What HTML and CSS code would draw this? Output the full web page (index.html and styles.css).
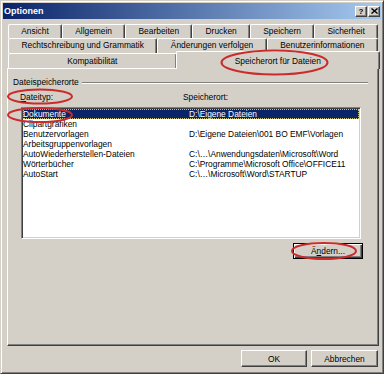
FILE: index.html
```html
<!DOCTYPE html>
<html lang="de">
<head>
    <meta charset="UTF-8">
    <title>Optionen</title>
    <link rel="stylesheet" href="styles.css">
</head>
<body>

<div class="window">
    <div class="titlebar">
        <span class="title">Optionen</span>
        <div class="caption-buttons">
            <span class="cap-btn">?</span>
            <span class="cap-btn">
                <svg width="7" height="6" viewBox="0 0 7 6"><path d="M0.5 0.5 L6.5 5.5 M6.5 0.5 L0.5 5.5" stroke="#000" stroke-width="1.4"/></svg>
            </span>
        </div>
    </div>

    <div class="sheet">
        <div class="tab-row row1">
            <div class="tab">Ansicht</div>
            <div class="tab">Allgemein</div>
            <div class="tab">Bearbeiten</div>
            <div class="tab">Drucken</div>
            <div class="tab">Speichern</div>
            <div class="tab">Sicherheit</div>
        </div>
        <div class="tab-row row2">
            <div class="tab">Rechtschreibung und Grammatik</div>
            <div class="tab">Änderungen verfolgen</div>
            <div class="tab">Benutzerinformationen</div>
        </div>
        <div class="tab-row row3">
            <div class="tab">Kompatibilität</div>
            <div class="tab active">Speicherort für Dateien</div>
        </div>

        <div class="panel">
            <div class="group-title"><span>Dateispeicherorte</span></div>
            <div class="list-head">
                <span><u>D</u>ateityp:</span>
                <span>Speicherort:</span>
            </div>
            <div class="list">
                <div class="row selected"><span>Dokumente</span><span>D:\Eigene Dateien</span></div>
                <div class="row"><span>Clipartgrafiken</span><span></span></div>
                <div class="row"><span>Benutzervorlagen</span><span>D:\Eigene Dateien\001 BO EMF\Vorlagen</span></div>
                <div class="row"><span>Arbeitsgruppenvorlagen</span><span></span></div>
                <div class="row"><span>AutoWiederherstellen-Dateien</span><span>C:\…\Anwendungsdaten\Microsoft\Word</span></div>
                <div class="row"><span>Wörterbücher</span><span>C:\Programme\Microsoft Office\OFFICE11</span></div>
                <div class="row"><span>AutoStart</span><span>C:\…\Microsoft\Word\STARTUP</span></div>
            </div>
            <div class="actions">
                <button class="btn default change">Ä<u>n</u>dern...</button>
            </div>
        </div>
    </div>

    <div class="footer">
        <button class="btn ok">OK</button>
        <button class="btn cancel">Abbrechen</button>
    </div>

    <!-- red annotation marks -->
    <svg class="marks" width="384" height="374" viewBox="0 0 384 374">
        <ellipse cx="274.5" cy="62.5" rx="53" ry="12"/>
        <ellipse cx="40" cy="96.5" rx="32" ry="7"/>
        <ellipse cx="40" cy="115" rx="32" ry="7"/>
        <ellipse cx="324" cy="251" rx="32" ry="8"/>
    </svg>
</div>

</body>
</html>
```

FILE: styles.css
```css
body {
    margin: 0;
    font-family: "Liberation Sans", Arial, sans-serif;
    font-size: 8.4px;
    color: #000;
    background: #d4d0c8;
}
.window {
    position: relative;
    width: 384px;
    height: 374px;
    box-sizing: border-box;
    border: 1px solid;
    border-color: #d4d0c8 #404040 #404040 #d4d0c8;
    box-shadow: inset 1px 1px #fff, inset -1px -1px #808080;
    padding: 2px;
    background: #d4d0c8;
    display: flex;
    flex-direction: column;
}
.titlebar {
    height: 16px;
    display: flex;
    align-items: center;
    justify-content: space-between;
    padding: 0 1px 0 1px;
    background: linear-gradient(to right, #0a246a, #a6caf0);
    color: #fff;
    font-weight: bold;
    font-size: 9px;
}
.caption-buttons {
    display: flex;
    gap: 1px;
}
.cap-btn {
    width: 10px;
    height: 9px;
    display: flex;
    align-items: center;
    justify-content: center;
    background: #d4d0c8;
    color: #000;
    font-size: 8px;
    border: 1px solid;
    border-color: #fff #404040 #404040 #fff;
    box-shadow: inset -1px -1px #808080;
}
.sheet {
    margin: 5px 2px 0 4px;
}
.tab-row {
    display: flex;
    padding: 0 1px;
}
.row1 {
    height: 14px;
}
.row2, .row3 {
    height: 15px;
}
.tab {
    flex: 1 1 auto;
    text-align: center;
    white-space: nowrap;
    line-height: 13px;
    padding: 0 4px;
    border-top: 1px solid #fff;
    border-left: 1px solid #fff;
    border-right: 1px solid #404040;
    box-shadow: inset -1px 0 #808080;
    border-radius: 2px 2px 0 0;
}
.row3 .tab {
    padding-top: 1px;
}
.row3 .tab.active {
    position: relative;
    z-index: 1;
    margin: -2px -2px -1px -1px;
    padding-top: 3px;
    background: #d4d0c8;
}
.panel {
    height: 278px;
    box-sizing: border-box;
    border: 1px solid;
    border-color: #fff #404040 #404040 #fff;
    box-shadow: inset -1px -1px #808080;
    padding: 8px 10px 0 5px;
}
.group-title {
    display: flex;
    align-items: center;
    gap: 3px;
    line-height: 11px;
}
.group-title::after {
    content: "";
    flex: 1;
    border-top: 1px solid #808080;
    border-bottom: 1px solid #fff;
}
.list-head {
    display: grid;
    grid-template-columns: 163px 1fr;
    margin-top: 4px;
    padding-left: 7px;
    line-height: 11px;
}
.list {
    margin: 4px 0 0 8px;
    width: 340px;
    height: 132px;
    box-sizing: border-box;
    background: #fff;
    border: 1px solid;
    border-color: #808080 #fff #fff #808080;
    box-shadow: inset 1px 1px #404040, inset -1px -1px #d4d0c8;
    padding: 1px;
}
.row {
    display: grid;
    grid-template-columns: 166px 1fr;
    height: 10px;
    line-height: 10px;
    white-space: nowrap;
}
.row.selected {
    background: #0a246a;
    color: #fff;
    outline: 1px dotted #c8c080;
    outline-offset: -1px;
}
.actions {
    display: flex;
    justify-content: flex-end;
    margin: 4px 5px 0 0;
}
.btn {
    font: inherit;
    color: #000;
    background: #d4d0c8;
    border: 1px solid;
    border-color: #fff #404040 #404040 #fff;
    box-shadow: inset -1px -1px #808080;
    padding: 0;
    height: 17px;
}
.btn.default {
    border: 1px solid #000;
    box-shadow: inset 1px 1px #fff, inset -1px -1px #404040, inset -2px -2px #808080;
}
.change {
    width: 70px;
    height: 16px;
}
.footer {
    display: flex;
    justify-content: flex-end;
    gap: 4px;
    margin-top: 4px;
    padding-right: 3px;
}
.ok {
    width: 66px;
}
.cancel {
    width: 67px;
}
.marks {
    position: absolute;
    left: -1px;
    top: -1px;
    z-index: 2;
    pointer-events: none;
}
.marks ellipse {
    fill: none;
    stroke: #cc2b2b;
    stroke-width: 2;
}
```
